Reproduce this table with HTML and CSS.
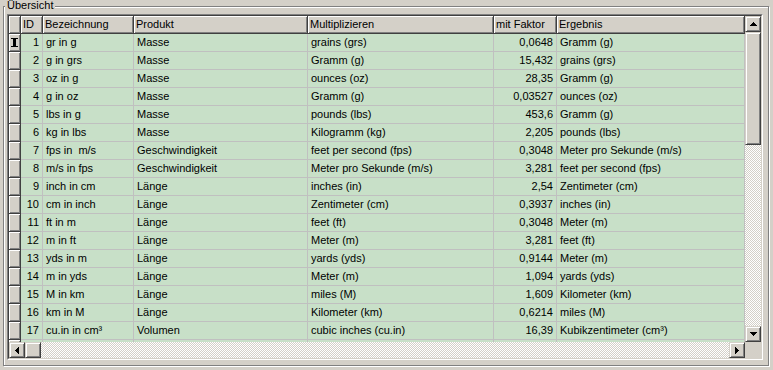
FILE: index.html
```html
<!DOCTYPE html>
<html lang="de">
<head>
<meta charset="utf-8">
<title>Übersicht</title>
<link rel="stylesheet" href="styles.css">
</head>
<body>
<div class="group">
  <div class="legend">Übersicht</div>
  <div class="grid-outer">
    <div class="grid-inner">
      <div class="table">
        <div class="row head">
          <div class="hc"></div>
          <div class="hc">ID</div>
          <div class="hc">Bezeichnung</div>
          <div class="hc">Produkt</div>
          <div class="hc">Multiplizieren</div>
          <div class="hc">mit Faktor</div>
          <div class="hc">Ergebnis</div>
        </div>
        <div class="row"><div class="hc ind"><svg width="7" height="9" viewBox="0 0 7 9"><path d="M0 0h7v1H0zM2 1h3v7H2zM0 8h7v1H0z" fill="#000"/></svg></div><div class="c r">1</div><div class="c">gr in g</div><div class="c">Masse</div><div class="c">grains (grs)</div><div class="c r">0,0648</div><div class="c">Gramm (g)</div></div>
        <div class="row"><div class="hc ind"></div><div class="c r">2</div><div class="c">g in grs</div><div class="c">Masse</div><div class="c">Gramm (g)</div><div class="c r">15,432</div><div class="c">grains (grs)</div></div>
        <div class="row"><div class="hc ind"></div><div class="c r">3</div><div class="c">oz in g</div><div class="c">Masse</div><div class="c">ounces (oz)</div><div class="c r">28,35</div><div class="c">Gramm (g)</div></div>
        <div class="row"><div class="hc ind"></div><div class="c r">4</div><div class="c">g in oz</div><div class="c">Masse</div><div class="c">Gramm (g)</div><div class="c r">0,03527</div><div class="c">ounces (oz)</div></div>
        <div class="row"><div class="hc ind"></div><div class="c r">5</div><div class="c">lbs in g</div><div class="c">Masse</div><div class="c">pounds (lbs)</div><div class="c r">453,6</div><div class="c">Gramm (g)</div></div>
        <div class="row"><div class="hc ind"></div><div class="c r">6</div><div class="c">kg in lbs</div><div class="c">Masse</div><div class="c">Kilogramm (kg)</div><div class="c r">2,205</div><div class="c">pounds (lbs)</div></div>
        <div class="row"><div class="hc ind"></div><div class="c r">7</div><div class="c">fps in  m/s</div><div class="c">Geschwindigkeit</div><div class="c">feet per second (fps)</div><div class="c r">0,3048</div><div class="c">Meter pro Sekunde (m/s)</div></div>
        <div class="row"><div class="hc ind"></div><div class="c r">8</div><div class="c">m/s in fps</div><div class="c">Geschwindigkeit</div><div class="c">Meter pro Sekunde (m/s)</div><div class="c r">3,281</div><div class="c">feet per second (fps)</div></div>
        <div class="row"><div class="hc ind"></div><div class="c r">9</div><div class="c">inch in cm</div><div class="c">Länge</div><div class="c">inches (in)</div><div class="c r">2,54</div><div class="c">Zentimeter (cm)</div></div>
        <div class="row"><div class="hc ind"></div><div class="c r">10</div><div class="c">cm in inch</div><div class="c">Länge</div><div class="c">Zentimeter (cm)</div><div class="c r">0,3937</div><div class="c">inches (in)</div></div>
        <div class="row"><div class="hc ind"></div><div class="c r">11</div><div class="c">ft in m</div><div class="c">Länge</div><div class="c">feet (ft)</div><div class="c r">0,3048</div><div class="c">Meter (m)</div></div>
        <div class="row"><div class="hc ind"></div><div class="c r">12</div><div class="c">m in ft</div><div class="c">Länge</div><div class="c">Meter (m)</div><div class="c r">3,281</div><div class="c">feet (ft)</div></div>
        <div class="row"><div class="hc ind"></div><div class="c r">13</div><div class="c">yds in m</div><div class="c">Länge</div><div class="c">yards (yds)</div><div class="c r">0,9144</div><div class="c">Meter (m)</div></div>
        <div class="row"><div class="hc ind"></div><div class="c r">14</div><div class="c">m in yds</div><div class="c">Länge</div><div class="c">Meter (m)</div><div class="c r">1,094</div><div class="c">yards (yds)</div></div>
        <div class="row"><div class="hc ind"></div><div class="c r">15</div><div class="c">M in km</div><div class="c">Länge</div><div class="c">miles (M)</div><div class="c r">1,609</div><div class="c">Kilometer (km)</div></div>
        <div class="row"><div class="hc ind"></div><div class="c r">16</div><div class="c">km in M</div><div class="c">Länge</div><div class="c">Kilometer (km)</div><div class="c r">0,6214</div><div class="c">miles (M)</div></div>
        <div class="row"><div class="hc ind"></div><div class="c r">17</div><div class="c">cu.in in cm³</div><div class="c">Volumen</div><div class="c">cubic inches (cu.in)</div><div class="c r">16,39</div><div class="c">Kubikzentimeter (cm³)</div></div>
        <div class="row"><div class="hc ind"></div><div class="c r"></div><div class="c"></div><div class="c"></div><div class="c"></div><div class="c r"></div><div class="c"></div></div>
      </div>
      <div class="vscroll">
        <div class="btn"><svg width="7" height="4" viewBox="0 0 7 4"><path d="M3.5 0L7 4H0z" fill="#000" shape-rendering="crispEdges"/></svg></div>
        <div class="btn vthumb"></div>
        <div class="track"></div>
        <div class="btn"><svg width="7" height="4" viewBox="0 0 7 4"><path d="M0 0h7L3.5 4z" fill="#000" shape-rendering="crispEdges"/></svg></div>
      </div>
      <div class="hscroll">
        <div class="btn"><svg width="4" height="7" viewBox="0 0 4 7"><path d="M4 0v7L0 3.5z" fill="#000" shape-rendering="crispEdges"/></svg></div>
        <div class="btn hthumb"></div>
        <div class="track"></div>
        <div class="btn"><svg width="4" height="7" viewBox="0 0 4 7"><path d="M0 0l4 3.5L0 7z" fill="#000" shape-rendering="crispEdges"/></svg></div>
      </div>
      <div class="corner"></div>
    </div>
  </div>
</div>
</body>
</html>
```
FILE: styles.css
```css
html, body {
  margin: 0;
  padding: 0;
}
body {
  width: 773px;
  height: 370px;
  overflow: hidden;
  background: #d4d0c8;
  font-family: "Liberation Sans", Arial, sans-serif;
  font-size: 11px;
  color: #000;
}
.group {
  position: relative;
  box-sizing: border-box;
  margin: 6px 0 0 3px;
  width: 766px;
  height: 360px;
  border: 1px solid #808080;
  box-shadow: inset 1px 1px 0 #fff, 1px 1px 0 #fff;
  padding: 7px 0 0 3px;
}
.legend {
  position: absolute;
  left: 1px;
  top: -8px;
  padding: 0 2px;
  line-height: 13px;
  background: #d4d0c8;
}
.grid-outer {
  box-sizing: border-box;
  width: 756px;
  height: 346px;
  border: 1px solid;
  border-color: #808080 #fff #fff #808080;
}
.grid-inner {
  box-sizing: border-box;
  width: 754px;
  height: 344px;
  border: 1px solid;
  border-color: #404040 #d4d0c8 #d4d0c8 #404040;
  display: grid;
  grid-template-columns: 736px 16px;
  grid-template-rows: 326px 16px;
}
.table {
  overflow: hidden;
  background: #d4d0c8;
}
.row {
  display: grid;
  grid-template-columns: 12px 22px 91px 174px 186px 63px 188px;
  height: 18px;
}
.hc {
  box-sizing: border-box;
  background: #d4d0c8;
  border-right: 1px solid #404040;
  border-bottom: 1px solid #404040;
  box-shadow: inset 1px 1px 0 #fff, inset -1px -1px 0 #808080;
  padding: 0 2px;
  line-height: 17px;
  white-space: nowrap;
  overflow: hidden;
}
.ind {
  padding: 0;
  display: flex;
  align-items: center;
  justify-content: center;
}
.c {
  box-sizing: border-box;
  background: #c8e0c8;
  border-right: 1px solid #c0c0c0;
  border-bottom: 1px solid #c0c0c0;
  padding: 0 2px 0 3px;
  line-height: 17px;
  white-space: pre;
  overflow: hidden;
}
.r {
  text-align: right;
  padding: 0 3px 0 2px;
}
.btn {
  box-sizing: border-box;
  width: 16px;
  height: 16px;
  flex: none;
  background: #d4d0c8;
  border: 1px solid;
  border-color: #d4d0c8 #404040 #404040 #d4d0c8;
  box-shadow: inset 1px 1px 0 #fff, inset -1px -1px 0 #808080;
  display: flex;
  align-items: center;
  justify-content: center;
}
.btn svg {
  display: block;
}
.track {
  flex: 1;
  background: repeating-conic-gradient(#fff 0 25%, #d4d0c8 0 50%) 0 0 / 2px 2px;
}
.vscroll {
  display: flex;
  flex-direction: column;
}
.vthumb {
  height: 113px;
}
.hscroll {
  display: flex;
}
.corner {
  background: #d4d0c8;
}
```
